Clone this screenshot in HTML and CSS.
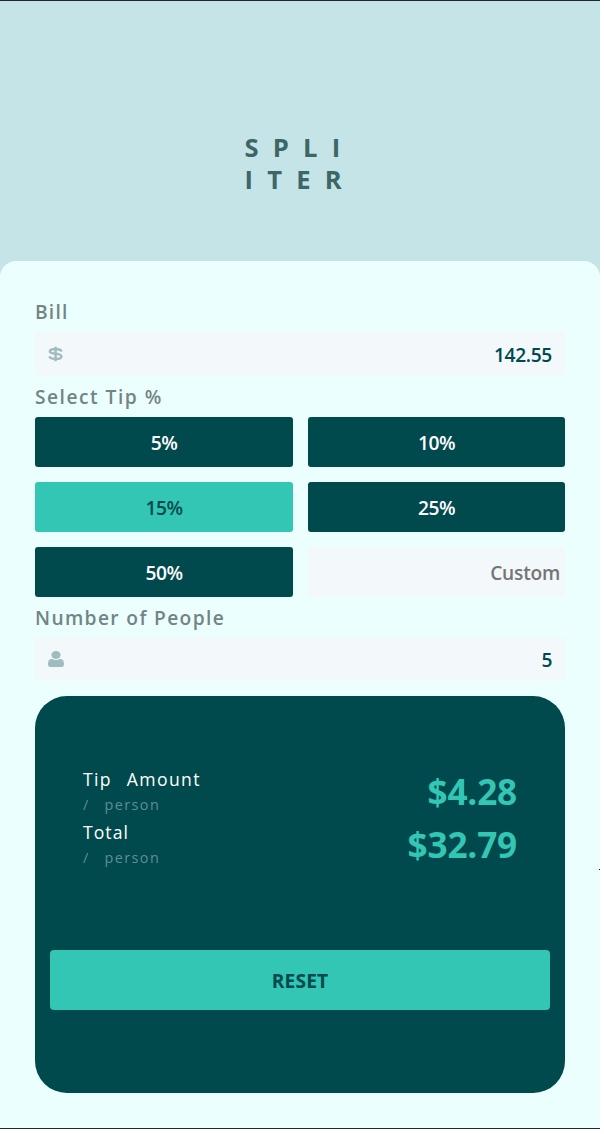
FILE: index.html
```html
<!DOCTYPE html>
<html lang="en">
<head>
<meta charset="utf-8">
<title>Spliiter</title>
<link rel="stylesheet" href="styles.css">
</head>
<body>
<div class="app">
  <header class="header"><h1 class="logo"><span>SPLI</span><span>ITER</span></h1></header>
  <main class="card">
    <div class="label label-bill">Bill</div>
    <div class="field">
      <svg class="icon" width="16" height="16" viewBox="0 0 16 16"><path d="M13.600 5.400C12.800 3.700 10.500 3 7.600 3 4.400 3 1.900 3.700 1.900 5.400 1.900 8.600 13.500 6.600 13.500 10.400 13.500 12.200 10.800 12.900 7.600 12.900 4.600 12.900 2 12.200 1.300 10.400M7.600 .8V15.200" fill="none" stroke="currentColor" stroke-width="2.400"/></svg>
      <span class="value">142.55</span>
    </div>
    <div class="label label-tip">Select Tip %</div>
    <div class="tips">
      <button class="tip">5%</button>
      <button class="tip">10%</button>
      <button class="tip active">15%</button>
      <button class="tip">25%</button>
      <button class="tip">50%</button>
      <div class="custom">Custom</div>
    </div>
    <div class="label label-people">Number of People</div>
    <div class="field">
      <svg class="icon" width="16" height="16" viewBox="0 0 16 16"><ellipse cx="8" cy="4" rx="4.600" ry="4"/><path d="M3.700 7.800Q8 10.400 12.300 7.800C15 8.200 16 10.500 16 13.200Q16 16 13 16H3Q0 16 0 13.200C0 10.500 1 8.200 3.700 7.800Z"/></svg>
      <span class="value">5</span>
    </div>
    <section class="result">
      <div class="row">
        <div><div class="name">Tip Amount</div><div class="per">/ person</div></div>
        <div class="amount">$4.28</div>
      </div>
      <div class="row">
        <div><div class="name total">Total</div><div class="per">/ person</div></div>
        <div class="amount">$32.79</div>
      </div>
      <button class="reset">RESET</button>
    </section>
  </main>
  <i class="tick"></i>
</div>
</body>
</html>
```
FILE: styles.css
```css
* { box-sizing: border-box; margin: 0; padding: 0; }
body { background: #fff; font-family: "Open Sans", "Noto Sans", sans-serif; }
button { border: 0; font: inherit; }
.app {
  position: relative;
  width: 600px;
  height: 1129px;
  background: #c5e4e7;
  border-top: 1px solid #25252d;
  border-bottom: 1px solid #25252d;
  overflow: hidden;
}
.header { height: 260px; padding: 131px 0 0 244.500px; }
.logo { color: #3d6666; font-size: 25.600px; line-height: 32px; font-weight: 700; }
.logo span { display: block; letter-spacing: 14.200px; white-space: nowrap; }
.card {
  height: 867px;
  padding: 36px 35px 0;
  background: #ebffff;
  border-radius: 16px 16px 0 0;
}
.label {
  height: 30px;
  line-height: 30px;
  font-size: 19.200px;
  font-weight: 600;
  letter-spacing: 1.360px;
  color: #738484;
  white-space: nowrap;
}
.label-bill { margin-bottom: 5px; letter-spacing: 1.200px; }
.label-tip { height: 41px; line-height: 41px; letter-spacing: 1.500px; }
.label-people { height: 40px; line-height: 41px; }
.field {
  display: flex;
  justify-content: space-between;
  align-items: center;
  height: 44px;
  padding: 0 13px;
  background: #f3f8fb;
  border-radius: 3px;
  color: #00494d;
  font-size: 19.200px;
  font-weight: 600;
}
.value { letter-spacing: -.35px; }
.icon { color: #9fbcbf; fill: #9fbcbf; }
.tips {
  display: grid;
  grid-template-columns: 258px 257px;
  grid-auto-rows: 50px;
  gap: 15px;
}
.tip {
  padding-top: 1px;
  background: #00494d;
  color: #fff;
  border-radius: 3px;
  font-size: 19.200px;
  font-weight: 600;
  letter-spacing: -.45px;
}
.tip.active { background: #33c6b4; color: #00494d; }
.custom {
  padding: 1px 5px 0 0;
  background: #f3f8fb;
  border-radius: 2px;
  color: #757575;
  font-size: 19.200px;
  line-height: 50px;
  font-weight: 600;
  letter-spacing: -.25px;
  text-align: right;
}
.result {
  height: 397px;
  margin-top: 15px;
  padding: 71px 15px 0;
  background: #00494d;
  border-radius: 32px;
}
.row { display: flex; justify-content: space-between; height: 53px; padding: 0 33px; }
.name {
  height: 26px;
  line-height: 24px;
  color: #fff;
  font-size: 17.600px;
  letter-spacing: 1.350px;
  word-spacing: 9px;
}
.name.total { letter-spacing: 1.050px; }
.per {
  height: 26px;
  line-height: 24px;
  color: #5f8f90;
  font-size: 14.400px;
  letter-spacing: 1.450px;
  word-spacing: 9.500px;
}
.amount { color: #33c6b4; font-size: 35.200px; line-height: 48px; font-weight: 700; letter-spacing: -.2px; }
.reset {
  display: block;
  width: 500px;
  height: 60px;
  margin-top: 77px;
  background: #33c6b4;
  border-radius: 4px;
  color: #00494d;
  font-size: 19.200px;
  font-weight: 700;
  letter-spacing: .15px;
}
/* Small mark on the right edge of the window */
.tick { position: absolute; right: 0; top: 868px; width: 1px; height: 1px; background: #111; }
```
